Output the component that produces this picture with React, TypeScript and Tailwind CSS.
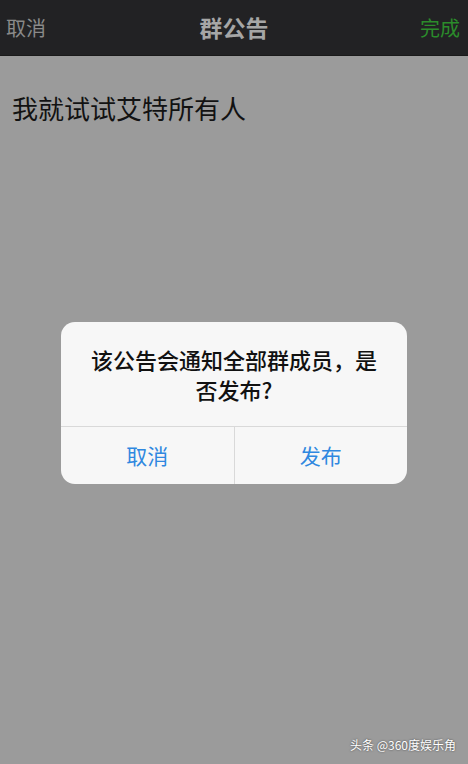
import React from 'react';

const font = { fontFamily: '"Noto Sans CJK SC", "Noto Sans", sans-serif' };

export default function App() {
  return (
    <div className="relative w-[468px] h-[764px] flex flex-col bg-[#9b9b9b] overflow-hidden" style={font}>
      {/* Nav bar */}
      <div className="h-[56px] shrink-0 bg-[#222224] flex items-center justify-between px-[6px] border-b border-[#1a1a1a]">
        <span className="text-[20px] text-[#8a8a8a] w-[60px]">取消</span>
        <span className="text-[23px] font-semibold text-[#a6a6a6]">群公告</span>
        <span className="text-[20px] text-[#2b8c2b] w-[60px] text-right pr-[2px]">完成</span>
      </div>

      {/* Announcement body */}
      <div className="flex-1 px-[12px] pt-[34px]">
        <p className="text-[26px] leading-[36px] text-[#121212]">我就试试艾特所有人</p>
      </div>

      {/* Alert */}
      <div className="absolute inset-0 flex justify-center pt-[322px]">
        <div className="w-[346px] h-[162px] bg-[#f7f7f7] rounded-[14px] flex flex-col overflow-hidden">
          <div className="px-6 pt-[22px] pb-[22px] text-center text-[22px] leading-[30px] font-medium text-[#111]">
            该公告会通知全部群成员，是否发布?
          </div>
          <div className="flex-1 flex border-t border-[#d9d9d9]">
            <button className="flex-1 text-[21px] text-[#2f88e0] border-r border-[#d9d9d9]">取消</button>
            <button className="flex-1 text-[21px] text-[#2f88e0]">发布</button>
          </div>
        </div>
      </div>

      {/* Watermark */}
      <div className="absolute right-[12px] bottom-[10px] text-[12px] text-white [text-shadow:0_0_2px_rgba(0,0,0,0.6)]">
        头条 @360度娱乐角
      </div>
    </div>
  );
}
